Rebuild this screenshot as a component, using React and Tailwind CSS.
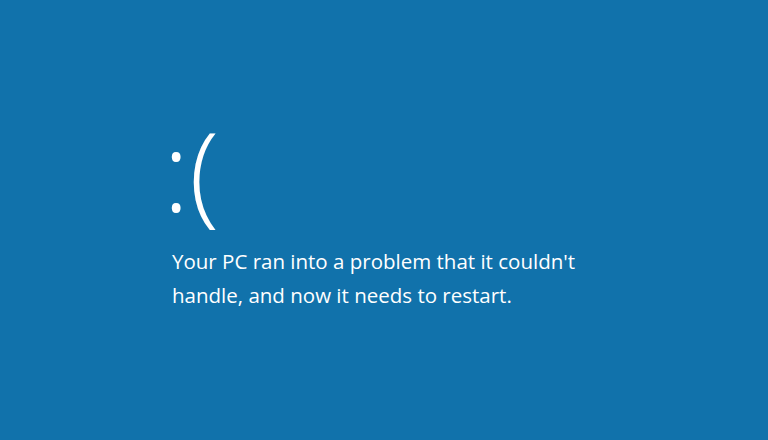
import React from 'react';

const App = () => {
  return (
    <div className="w-[768px] h-[440px] bg-[#1172ab] text-white overflow-hidden flex flex-col pl-[163px] pt-[104px]" style={{ fontFamily: '"Open Sans", "Noto Sans", sans-serif' }}>
      <div className="text-[110px] leading-[130px] font-light h-[130px]">:(</div>
      <p className="mt-[10px] text-[20.5px] leading-[34px] font-normal w-[450px] pl-[9px]">
        Your PC ran into a problem that it couldn't handle, and now it needs to restart.
      </p>
    </div>
  );
};

export default App;
